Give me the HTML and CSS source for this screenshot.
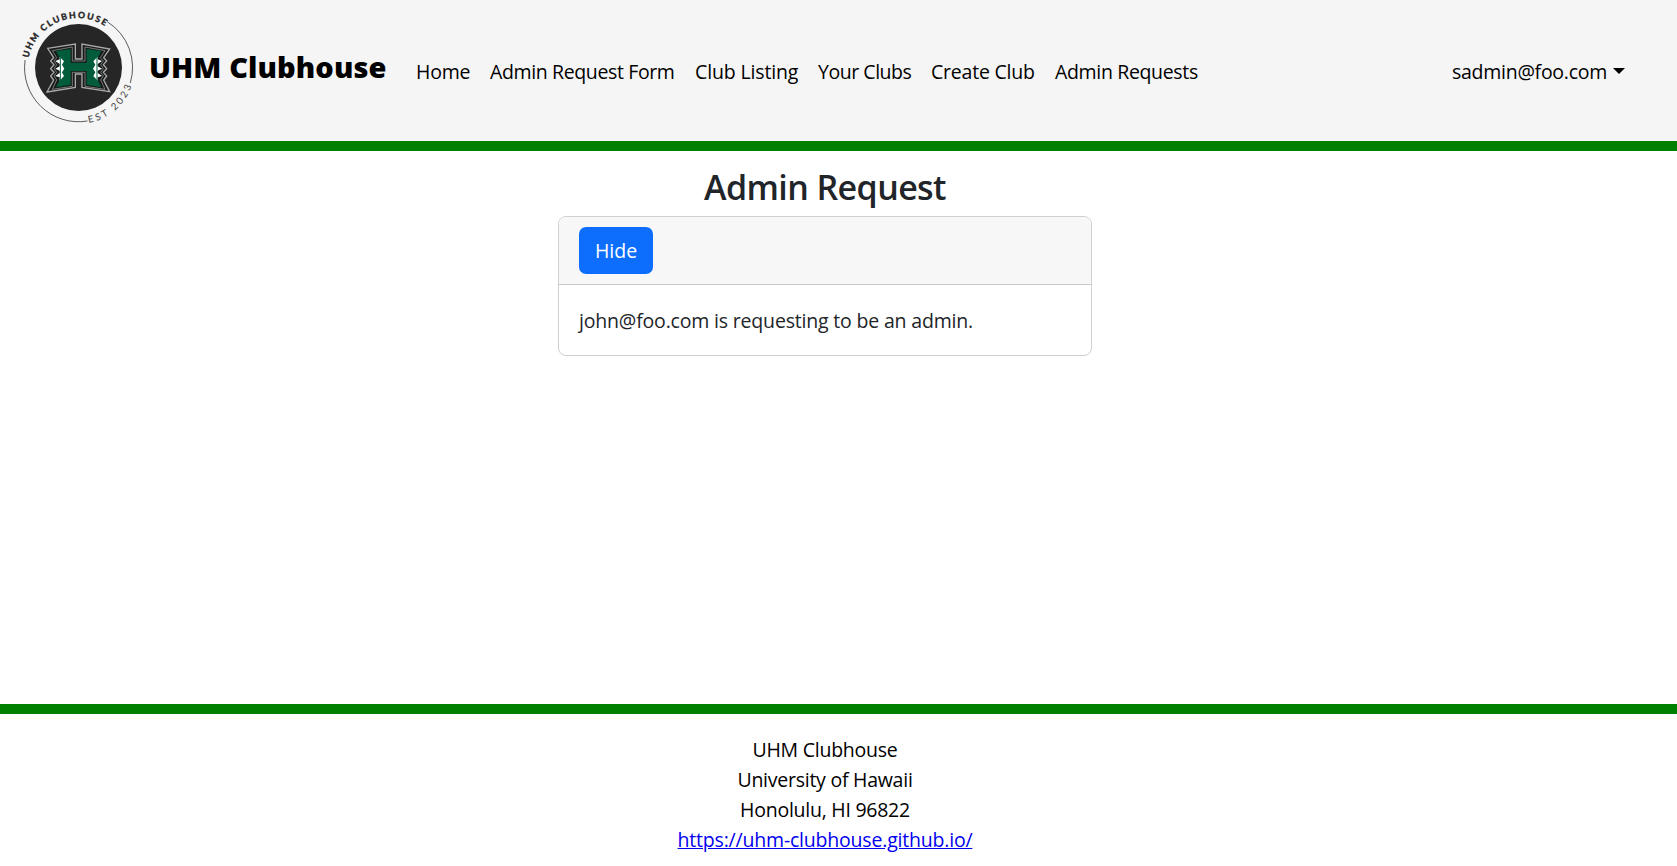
FILE: index.html
```html
<!DOCTYPE html>
<html lang="en">
<head>
<meta charset="utf-8">
<title>UHM Clubhouse</title>
<link rel="stylesheet" href="styles.css">
</head>
<body>
<header class="navbar">
  <svg class="logo" viewBox="20 7 117 120" width="117" height="120">
    <defs>
      <path id="arc-top" d="M28.6 58A50.3 50.3 0 0 1 121.4 43.4"/>
      <path id="arc-bottom" d="M88.8 122.9A56.3 56.3 0 0 0 134.8 67.5"/>
    </defs>
    <g fill="none" stroke="#333" stroke-width=".8">
      <path d="M107.4 21.8A54 54 0 0 1 130.3 83"/>
      <path d="M87.5 121A54 54 0 0 1 25.1 60"/>
    </g>
    <circle cx="78.5" cy="67.5" r="43.5" fill="#262626"/>
    <text class="logo-name"><textPath href="#arc-top" textLength="97">UHM CLUBHOUSE</textPath></text>
    <text class="logo-year"><textPath href="#arc-bottom" textLength="59">EST 2023</textPath></text>
    <g transform="scale(.33333)">
      <path fill="#171a19" stroke="#aaa" stroke-width="4" d="M143 145L226 132V177H246V132L329 147L311 173L320 183L310 194L320 206L310 217L320 228L311 240L329 275L246 262V222H226V262L141 276L161 240L152 228L162 217L152 206L162 194L152 183L161 173Z"/>
      <path fill="none" stroke="#8d9290" stroke-width="2.4" d="M157 152L217 141V183H255V141L315 152L301 173L310 183L302 194L310 206L302 217L310 228L302 240L315 268L255 259V217H217V259L157 268L170 240L162 228L170 217L162 206L170 194L162 183L170 173Z"/>
      <path fill="#005c3a" d="M168 153L212 147V188H260V147L304 153L293 174V240L304 262L260 254V213H212V254L168 262L179 240V174Z"/>
      <path fill="#fff" d="M179 170L192 184L186 194L193 206L186 217L192 228L179 242V232L166 228L179 219V212L166 206L179 199V192L166 183L179 178ZM293 170L280 184L286 194L279 206L286 217L280 228L293 242V232L306 228L293 219V212L306 206L293 199V192L306 183L293 178Z"/>
      <path stroke="#005c3a" stroke-width="3" d="M181 165V245M291 165V245"/>
    </g>
  </svg>
  <a class="brand">UHM Clubhouse</a>
  <nav class="links">
    <a class="home">Home</a>
    <a class="request-form">Admin Request Form</a>
    <a class="listing">Club Listing</a>
    <a class="your-clubs">Your Clubs</a>
    <a class="create">Create Club</a>
    <a class="requests">Admin Requests</a>
  </nav>
  <a class="user">sadmin@foo.com<i class="caret"></i></a>
</header>
<main class="content">
  <h1 class="title">Admin Request</h1>
  <section class="card">
    <div class="card-header"><button class="btn">Hide</button></div>
    <div class="card-body">john@foo.com is requesting to be an admin.</div>
  </section>
</main>
<footer class="footer">
  <div>UHM Clubhouse</div>
  <div>University of Hawaii</div>
  <div>Honolulu, HI 96822</div>
  <div><a class="site">https://uhm-clubhouse.github.io/</a></div>
</footer>
</body>
</html>
```
FILE: styles.css
```css
* { box-sizing: border-box; }
body {
  margin: 0;
  height: 866px;
  display: flex;
  flex-direction: column;
  overflow: hidden;
  font: 400 19.5px/30px "Open Sans", "Noto Sans", sans-serif;
  color: #212529;
  background: #fff;
}
a { color: #000; white-space: nowrap; }
.navbar {
  display: flex;
  height: 151px;
  padding: 7px 52px 17px 20px;
  background: #f5f5f5;
  border-bottom: 10px solid #008000;
}
.logo { flex: none; overflow: visible; }
.logo-name { font: 900 8.8px Lato, sans-serif; fill: #262626; stroke: #262626; stroke-width: .25px; }
.logo-year { font: 400 9.6px Lato, sans-serif; fill: #444; }
.brand {
  width: 267px;
  padding: 45px 0 0 12px;
  font-size: 29px;
  font-weight: 800;
  letter-spacing: .1px;
}
.links { display: flex; gap: 20px; padding-top: 50px; margin-left: 12px; }
.home { width: 54px; letter-spacing: -.2px; }
.request-form { width: 185px; letter-spacing: -.37px; }
.listing { width: 103px; letter-spacing: -.14px; }
.your-clubs { width: 93px; letter-spacing: -.46px; }
.create { width: 104px; letter-spacing: -.22px; }
.requests { width: 144px; letter-spacing: -.34px; }
.user { display: flex; margin-left: auto; padding-top: 50px; letter-spacing: -.27px; }
.caret {
  margin: 11px 0 0 6px;
  width: 12px;
  height: 6px;
  border: 6px solid transparent;
  border-top-color: #000;
  border-bottom: 0;
}
.content {
  flex: 1;
  width: 1650px;
  display: flex;
  flex-direction: column;
  align-items: center;
}
.title { margin: 15px 0 8px; font-size: 34px; line-height: 42px; font-weight: 600; letter-spacing: -.6px; }
.card {
  width: 534px;
  height: 140px;
  flex: none;
  border: 1px solid #d0d0d0;
  border-radius: 8px;
  overflow: hidden;
}
.card-header { height: 68px; padding: 10px 20px; background: #f7f7f7; border-bottom: 1px solid #c9c9c9; }
.card-body { padding: 21px 20px; letter-spacing: -.18px; }
.btn {
  display: block;
  width: 74px;
  height: 47px;
  padding: 0;
  border: 0;
  border-radius: 7px;
  color: #fff;
  background: #0d6efd;
  font: inherit;
}
.footer {
  height: 162px;
  padding: 21px 27px 0 0;
  border-top: 10px solid #008000;
  text-align: center;
  letter-spacing: -.25px;
  color: #000;
}
.site { color: #00e; text-decoration: underline; letter-spacing: -.2px; }
```
